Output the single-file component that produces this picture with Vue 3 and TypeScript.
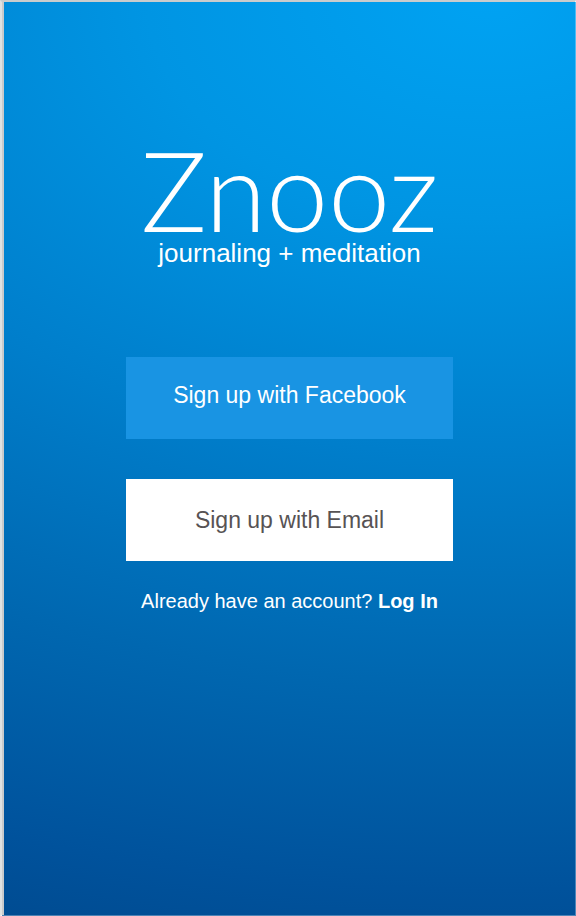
<script setup lang="ts">
interface SignUpOption {
  id: string
  label: string
}

const tagline = 'journaling + meditation'
const options: SignUpOption[] = [
  { id: 'facebook', label: 'Sign up with Facebook' },
  { id: 'email', label: 'Sign up with Email' },
]
</script>

<template>
  <main class="screen">
    <header class="brand">
      <h1 class="name">Znooz</h1>
      <p class="tagline">{{ tagline }}</p>
    </header>
    <div class="actions">
      <button
        v-for="option in options"
        :key="option.id"
        type="button"
        class="action"
        :class="option.id"
      >
        {{ option.label }}
      </button>
    </div>
    <p class="login">Already have an account? <a href="#login">Log In</a></p>
  </main>
</template>

<style>
body {
  margin: 0;
}
</style>

<style scoped>
.screen {
  box-sizing: border-box;
  min-height: 100vh;
  display: flex;
  flex-direction: column;
  align-items: center;
  padding: 139px 24px 40px 26px;
  border-style: solid;
  border-width: 2px 1px 1px 2px;
  border-color: #c9cccd rgba(255, 255, 255, 0.3) rgba(255, 255, 255, 0.3) #e0e1e1;
  box-shadow: inset 2px 0 #c9cacb;
  background: radial-gradient(270% 108% at 85% 0%, #00a2f2 0%, #0095e3 22%, #007ecb 46%, #0067b0 69%, #00529c 90%, #004a8f 100%) border-box;
  color: #fff;
  font-family: "Liberation Sans", Arial, sans-serif;
}

.brand {
  display: flex;
  flex-direction: column;
  align-items: center;
}

.name {
  margin: 0;
  font-family: Lato, "Liberation Sans", sans-serif;
  font-size: 111px;
  font-weight: 300;
  line-height: 96px;
}

.tagline {
  margin: 0;
  font-size: 26px;
  line-height: 32px;
}

.actions {
  display: flex;
  flex-direction: column;
  gap: 40px;
  width: 100%;
  max-width: 327px;
  margin-top: 88px;
}

.action {
  min-height: 82px;
  padding: 0 16px;
  border: 0;
  font-family: inherit;
  font-size: 23px;
  line-height: 28px;
  cursor: pointer;
}

.facebook {
  padding-bottom: 6px;
  background: #1994e3;
  color: #fff;
}

.email {
  background: #fff;
  color: #575354;
}

.login {
  margin: 28px 0 0;
  font-size: 20px;
  line-height: 24px;
}

.login a {
  color: inherit;
  font-weight: 700;
  text-decoration: none;
}
</style>
